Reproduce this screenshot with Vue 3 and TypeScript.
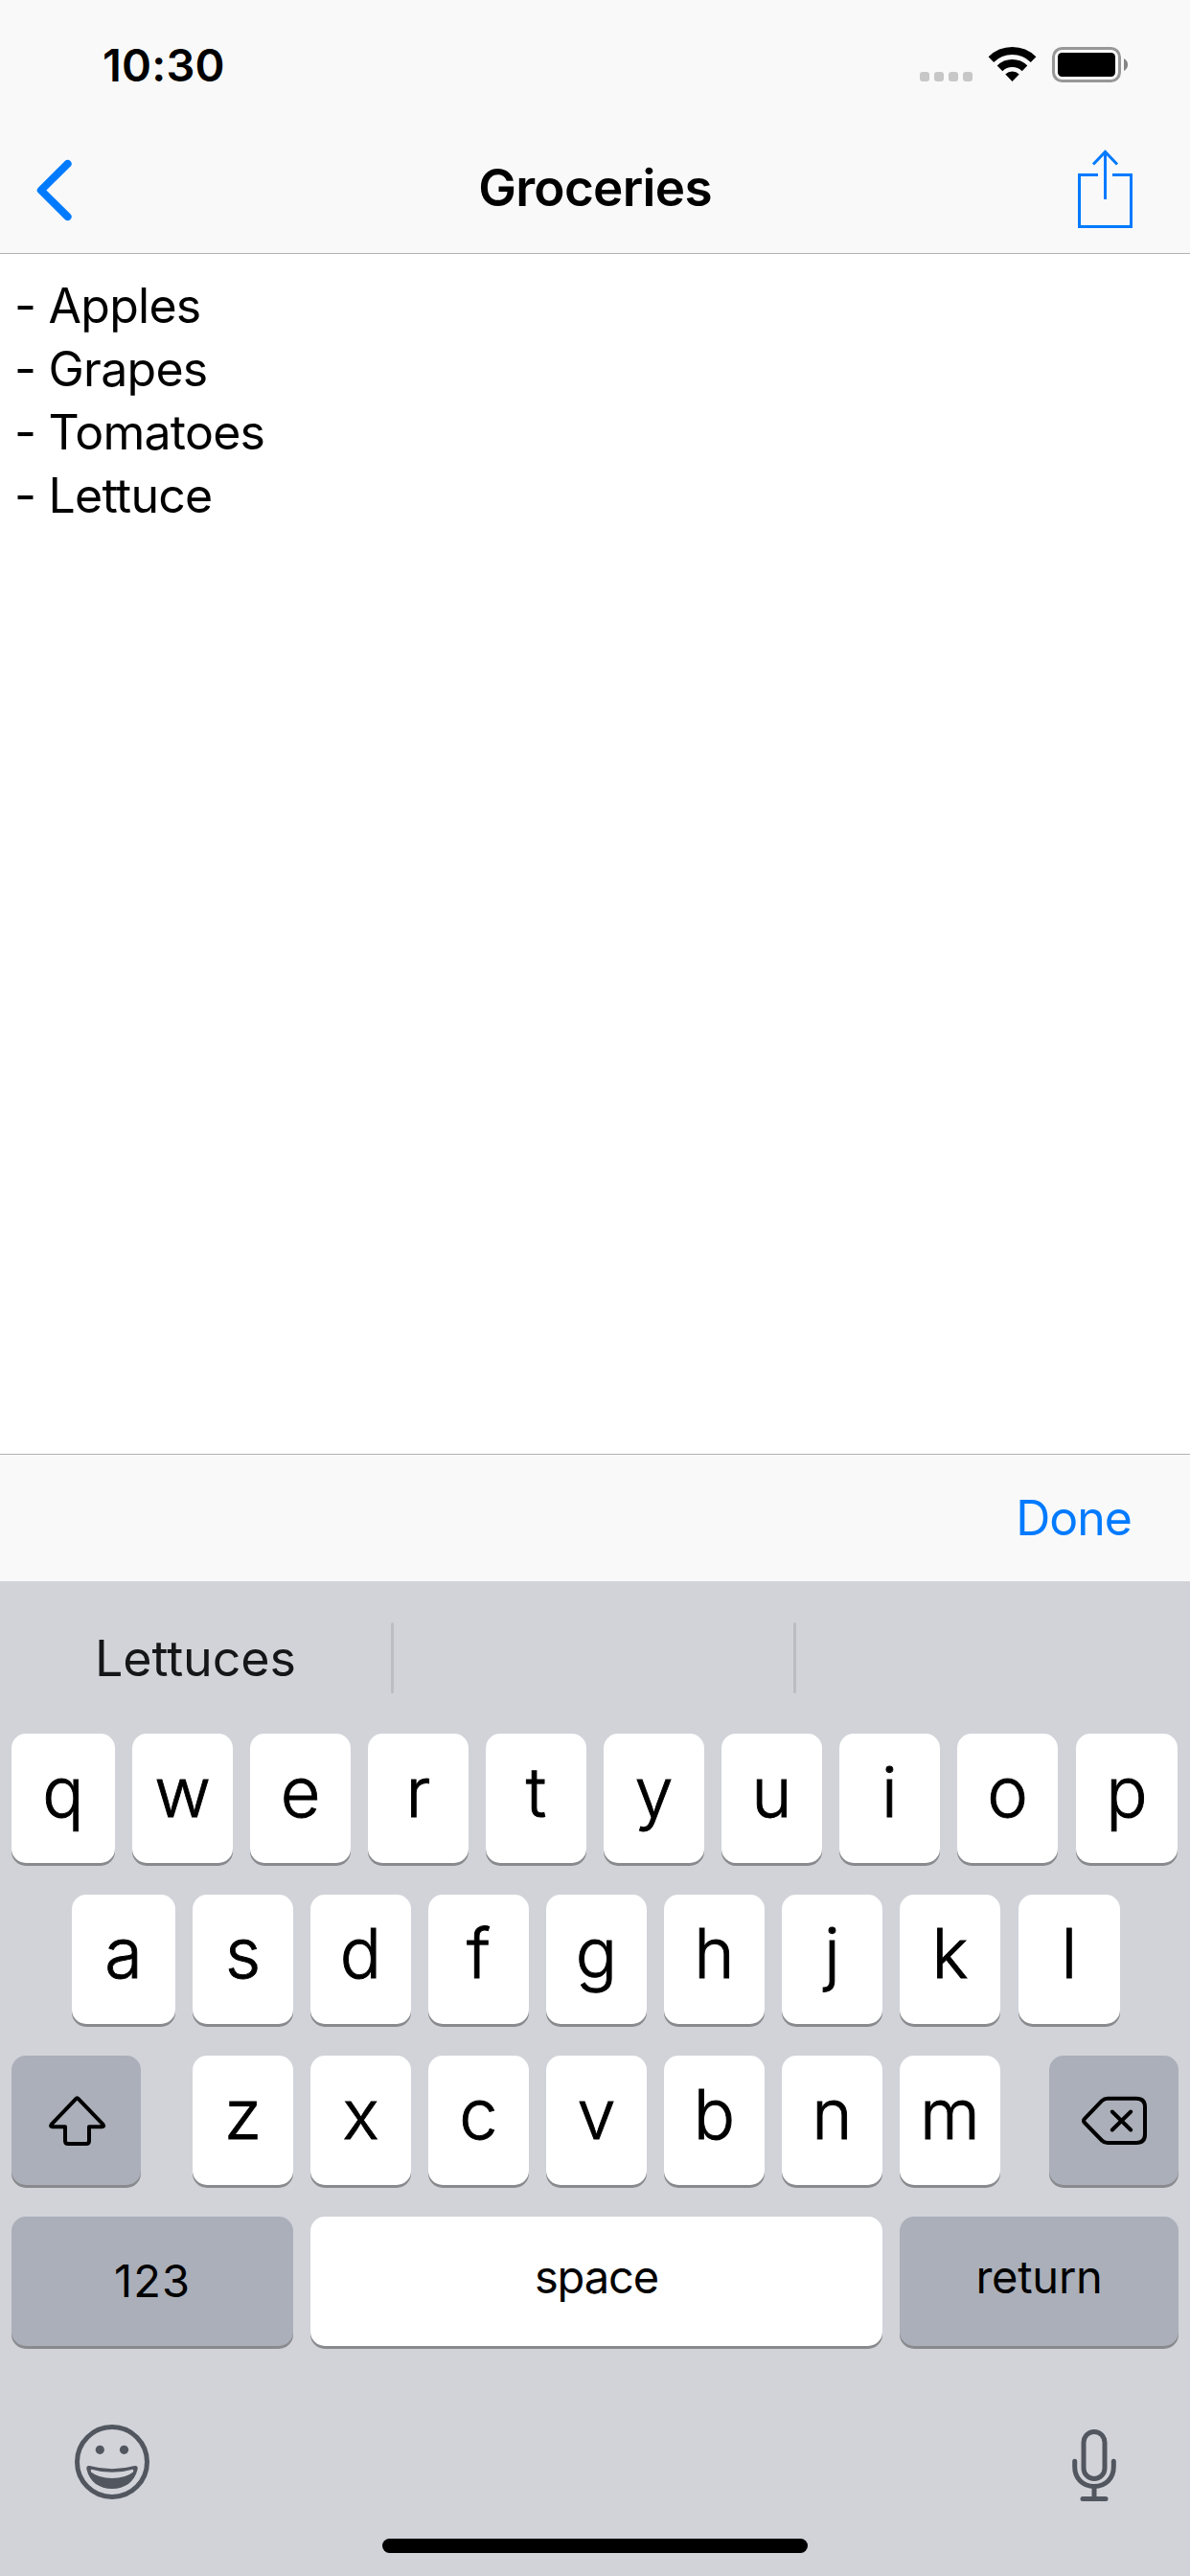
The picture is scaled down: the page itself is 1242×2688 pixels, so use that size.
<script setup lang="ts">
const items: string[] = ['Apples', 'Grapes', 'Tomatoes', 'Lettuce']
const topRow: string[] = [...'qwertyuiop']
const homeRow: string[] = [...'asdfghjkl']
const bottomRow: string[] = [...'zxcvbnm']
const signalDots: number[] = [0, 15, 30, 45]
</script>

<template>
  <div class="screen">
    <header class="header">
      <div class="status">
        <span class="time">10:30</span>
        <svg class="status-icons" width="220" height="40" viewBox="960 47 220 40">
          <rect v-for="d in signalDots" :key="d" :x="960 + d" y="75" width="10" height="10" rx="3" fill="#c7c7c7" />
          <g fill="none" stroke="#000" stroke-width="8">
            <path d="M1034.4 62.1A31.5 31.5 0 0 1 1078.6 62.1" />
            <path d="M1043.5 71.3A18.5 18.5 0 0 1 1069.5 71.3" />
          </g>
          <path d="M1056.5 85L1049.3 77.4A10.5 10.5 0 0 1 1063.7 77.4Z" />
          <rect x="1099.5" y="50.5" width="69" height="34" rx="9" fill="none" stroke="#979797" stroke-width="3" />
          <rect x="1104" y="55" width="60" height="25" rx="4.5" />
          <path d="M1173 61C1178.4 63.5 1178.4 71.5 1173 74Z" fill="#858585" />
        </svg>
      </div>
      <nav class="nav">
        <svg class="back" width="40" height="66" viewBox="37 165 40 66">
          <path d="M70.6 170.9L42.8 198.5L70.6 226.1" fill="none" stroke="#007aff" stroke-width="8" stroke-linecap="round" stroke-linejoin="round" />
        </svg>
        <h1 class="title">Groceries</h1>
        <svg class="share" width="60" height="84" viewBox="1124 156 60 84">
          <g fill="none" stroke="#007aff" stroke-width="3">
            <path d="M1146 182.5H1126.5V236.5H1180.5V182.5H1161" />
            <path d="M1153.5 208V159" />
            <path d="M1141 171.5L1153.5 158.5L1166 171.5" />
          </g>
        </svg>
      </nav>
    </header>

    <main class="note">
      <div v-for="item in items" :key="item">- {{ item }}</div>
    </main>

    <div class="toolbar"><span class="done">Done</span></div>

    <section class="keyboard">
      <div class="suggestions">
        <span class="suggestion first">Lettuces</span>
        <i class="divider"></i>
        <span class="suggestion middle"></span>
        <i class="divider"></i>
      </div>

      <div class="row letters">
        <span v-for="k in topRow" :key="k" class="key">{{ k }}</span>
      </div>
      <div class="row letters home">
        <span v-for="k in homeRow" :key="k" class="key">{{ k }}</span>
      </div>
      <div class="row">
        <span class="key dark side">
          <svg width="64" height="60" viewBox="49 2184 64 60">
            <path d="M80.2 2191.2Q81.5 2189.5 82.8 2191.2L108.4 2217.6Q110.2 2220.2 107.2 2220.2H94V2235Q94 2238 91 2238H72Q69 2238 69 2235V2220.2H56Q53 2220.2 54.8 2217.6Z" fill="none" stroke="#000" stroke-width="4" stroke-linejoin="round" />
          </svg>
        </span>
        <div class="mid">
          <span v-for="k in bottomRow" :key="k" class="key">{{ k }}</span>
        </div>
        <span class="key dark side">
          <svg width="72" height="54" viewBox="1127 2187 72 54">
            <g fill="none" stroke="#000" stroke-width="4" stroke-linecap="round" stroke-linejoin="round">
              <path d="M1156 2190.7H1186Q1195 2190.7 1195 2199.7V2228Q1195 2237 1186 2237H1156Q1152.5 2237 1150 2234.5L1132 2216Q1130 2213.9 1132 2211.8L1150 2193.2Q1152.5 2190.7 1156 2190.7Z" />
              <path d="M1160.8 2204.5L1180.2 2223.5M1180.2 2204.5L1160.8 2223.5" />
            </g>
          </svg>
        </span>
      </div>
      <div class="row words">
        <span class="key dark numbers">123</span>
        <span class="key space">space</span>
        <span class="key dark return">return</span>
      </div>

      <div class="footer">
        <svg width="80" height="80" viewBox="77 2529 80 80">
          <circle cx="117" cy="2569" r="36.5" fill="none" stroke="#52565e" stroke-width="5" />
          <circle cx="104.3" cy="2556.3" r="4.6" fill="#52565e" />
          <circle cx="129.5" cy="2556.3" r="4.6" fill="#52565e" />
          <path d="M93.5 2573Q117 2579.5 140.5 2573Q144.5 2572.5 143.5 2577C140.5 2590 130 2597 117 2597S93.5 2590 90.5 2577Q89.5 2572.5 93.5 2573Z" fill="#52565e" />
          <path d="M95.5 2576.7Q117 2583 138.5 2576.7Q139.8 2577 139 2579.5Q131 2586 117 2586T95 2579.5Q94.2 2577 95.5 2576.7Z" fill="#d1d3d9" />
        </svg>
        <svg width="50" height="80" viewBox="1116.5 2533 50 80">
          <g fill="none" stroke="#52565e" stroke-width="5" stroke-linecap="round">
            <rect x="1130.5" y="2537.5" width="22" height="49" rx="11" />
            <path d="M1121.2 2568.2V2574C1121.2 2586 1129.5 2594.5 1141.5 2594.5S1161.8 2586 1161.8 2574V2568.2" />
            <path d="M1141.5 2595V2606" />
            <path d="M1129.5 2607.5H1153.5" />
          </g>
        </svg>
      </div>
      <div class="home-bar"></div>
    </section>
  </div>
</template>

<style>
body {
  margin: 0;
}
</style>

<style scoped>
.screen {
  display: flex;
  flex-direction: column;
  width: 1242px;
  height: 2688px;
  overflow: hidden;
  background: #fff;
  color: #000;
  font-family: Inter, "Liberation Sans", sans-serif;
}
svg {
  display: block;
  flex: none;
}
.header {
  box-sizing: border-box;
  height: 265px;
  background: #f9f9f9;
  border-bottom: 1px solid #b2b2b2;
}
.status {
  display: flex;
  justify-content: space-between;
  height: 132px;
  padding: 0 62px 0 107px;
}
.time {
  font-size: 47px;
  font-weight: 600;
  line-height: 136px;
  letter-spacing: 0.2px;
}
.status-icons {
  margin-top: 47px;
}
.nav {
  display: flex;
  align-items: center;
  justify-content: space-between;
  height: 132px;
  padding: 0 58px 0 37px;
}
.back {
  margin-right: 41px;
}
.title {
  margin: 0 0 3px;
  font-size: 53px;
  font-weight: 600;
  line-height: 129px;
  letter-spacing: -0.7px;
}
.note {
  flex: 1;
  padding: 21px 15px 0;
  font-size: 50px;
  line-height: 66px;
  letter-spacing: -0.75px;
}
.toolbar {
  box-sizing: border-box;
  display: flex;
  justify-content: flex-end;
  height: 133px;
  padding-right: 61px;
  border-top: 1px solid #b2b2b2;
  background: #f9f9f9;
}
.done {
  color: #007aff;
  font-size: 50px;
  line-height: 132px;
  letter-spacing: -1px;
}
.keyboard {
  height: 1038px;
  background: #d1d3d9;
}
.suggestions {
  display: flex;
  align-items: center;
  height: 159px;
}
.suggestion {
  text-align: center;
  font-size: 52px;
  line-height: 159px;
  letter-spacing: -0.1px;
  color: #151617;
}
.first {
  width: 408px;
  padding-top: 1px;
}
.middle {
  width: 417px;
}
.divider {
  width: 3px;
  height: 74px;
  border-radius: 2px;
  background: #bbbdc2;
}
.row {
  display: flex;
  justify-content: space-between;
  height: 135px;
  padding: 0 12px;
  margin-bottom: 33px;
}
.letters {
  justify-content: flex-start;
  gap: 18px;
}
.home {
  padding-left: 75px;
}
.mid {
  display: flex;
  gap: 18px;
  margin-right: -3px;
}
.key {
  width: 105px;
  height: 135px;
  border-radius: 15px;
  background: #fff;
  box-shadow: 0 3px 0 #898a8d;
  text-align: center;
  font-size: 72px;
  font-weight: 300;
  line-height: 122px;
  -webkit-text-stroke: 0.9px #000;
}
.letters .key:first-child {
  width: 108px;
}
.letters .key:last-child {
  width: 106px;
  margin-left: 1px;
}
.dark {
  background: #abafb9;
}
.side {
  display: flex;
  align-items: center;
  justify-content: center;
  width: 135px;
}
.words {
  justify-content: flex-start;
  gap: 18px;
  margin-bottom: 0;
}
.words .key {
  font-size: 47px;
  font-weight: 400;
  line-height: 126px;
  -webkit-text-stroke: 0;
}
.words .numbers {
  width: 294px;
  line-height: 134px;
  letter-spacing: 1.1px;
}
.words .space {
  width: 597px;
  letter-spacing: -1.1px;
}
.words .return {
  width: 291px;
  letter-spacing: -0.25px;
}
.footer {
  display: flex;
  justify-content: space-between;
  height: 120px;
  padding: 81px 75.5px 0 77px;
}
.footer svg:last-child {
  margin-top: 4px;
}
.home-bar {
  width: 444px;
  height: 15px;
  margin: 0 auto;
  border-radius: 8px;
  background: #000;
}
</style>
